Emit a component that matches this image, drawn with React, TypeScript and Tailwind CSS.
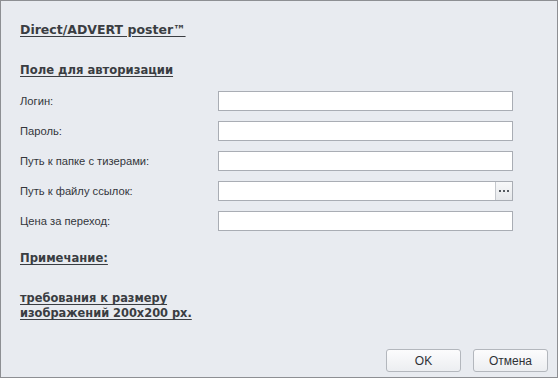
import React from 'react';

const fields = [
  { id: 'login', label: 'Логин:' },
  { id: 'password', label: 'Пароль:' },
  { id: 'teasers', label: 'Путь к папке с тизерами:' },
  { id: 'links', label: 'Путь к файлу ссылок:', browse: true },
  { id: 'price', label: 'Цена за переход:' },
];

export default function App() {
  return (
    <div className="w-[559px] h-[379px] bg-white" style={{ fontFamily: '"DejaVu Sans", Verdana, sans-serif' }}>
      <div className="w-[558px] h-[378px] border border-[#8d8f93] bg-[#e8ebf0] flex flex-col text-[#3a3d42]">
        <div className="pl-[19px] pt-[21px]">
          <h1 className="text-[12.5px] font-bold underline underline-offset-2 leading-[16px]">
            Direct/ADVERT poster™
          </h1>
          <h2 className="mt-[24px] text-[11.6px] font-bold underline underline-offset-2 leading-[16px]">
            Поле для авторизации
          </h2>
        </div>

        <div className="mt-[13px] flex flex-col gap-[10px]">
          {fields.map((f) => (
            <div key={f.id} className="flex items-center h-[20px]">
              <label
                className="w-[217px] pl-[19px] text-[11.2px] text-[#33363b]"
                style={{ fontFamily: '"Liberation Sans", Arial, sans-serif' }}
              >
                {f.label}
              </label>
              <div className="w-[295px] h-[20px] border border-[#a9adb4] bg-white flex justify-end">
                {f.browse && (
                  <button className="w-[17px] h-full border-l border-[#c5c8cd] bg-gradient-to-b from-[#f7f8f9] to-[#e6e8eb] flex items-center justify-center gap-[2px]">
                    <span className="w-[2px] h-[2px] bg-[#555a60]" />
                    <span className="w-[2px] h-[2px] bg-[#555a60]" />
                    <span className="w-[2px] h-[2px] bg-[#555a60]" />
                  </button>
                )}
              </div>
            </div>
          ))}
        </div>

        <div className="pl-[19px] mt-[19px]">
          <p className="text-[11.6px] font-bold underline underline-offset-2 leading-[16px]">Примечание:</p>
          <p className="mt-[25px] text-[11.4px] font-bold underline underline-offset-2 leading-[15px]">
            требования к размеру
            <br />
            изображений 200x200 px.
          </p>
        </div>

        <div
          className="mt-auto mb-[5px] flex justify-end gap-[12px] pr-[9px]"
          style={{ fontFamily: '"Liberation Sans", Arial, sans-serif' }}
        >
          <button className="w-[75px] h-[23px] rounded-[3px] border border-[#b3b7bd] bg-gradient-to-b from-[#fcfcfd] to-[#eceef1] text-[12px] text-[#2f3236]">
            OK
          </button>
          <button className="w-[75px] h-[23px] rounded-[3px] border border-[#b3b7bd] bg-gradient-to-b from-[#fcfcfd] to-[#eceef1] text-[12px] text-[#2f3236]">
            Отмена
          </button>
        </div>
      </div>
    </div>
  );
}
